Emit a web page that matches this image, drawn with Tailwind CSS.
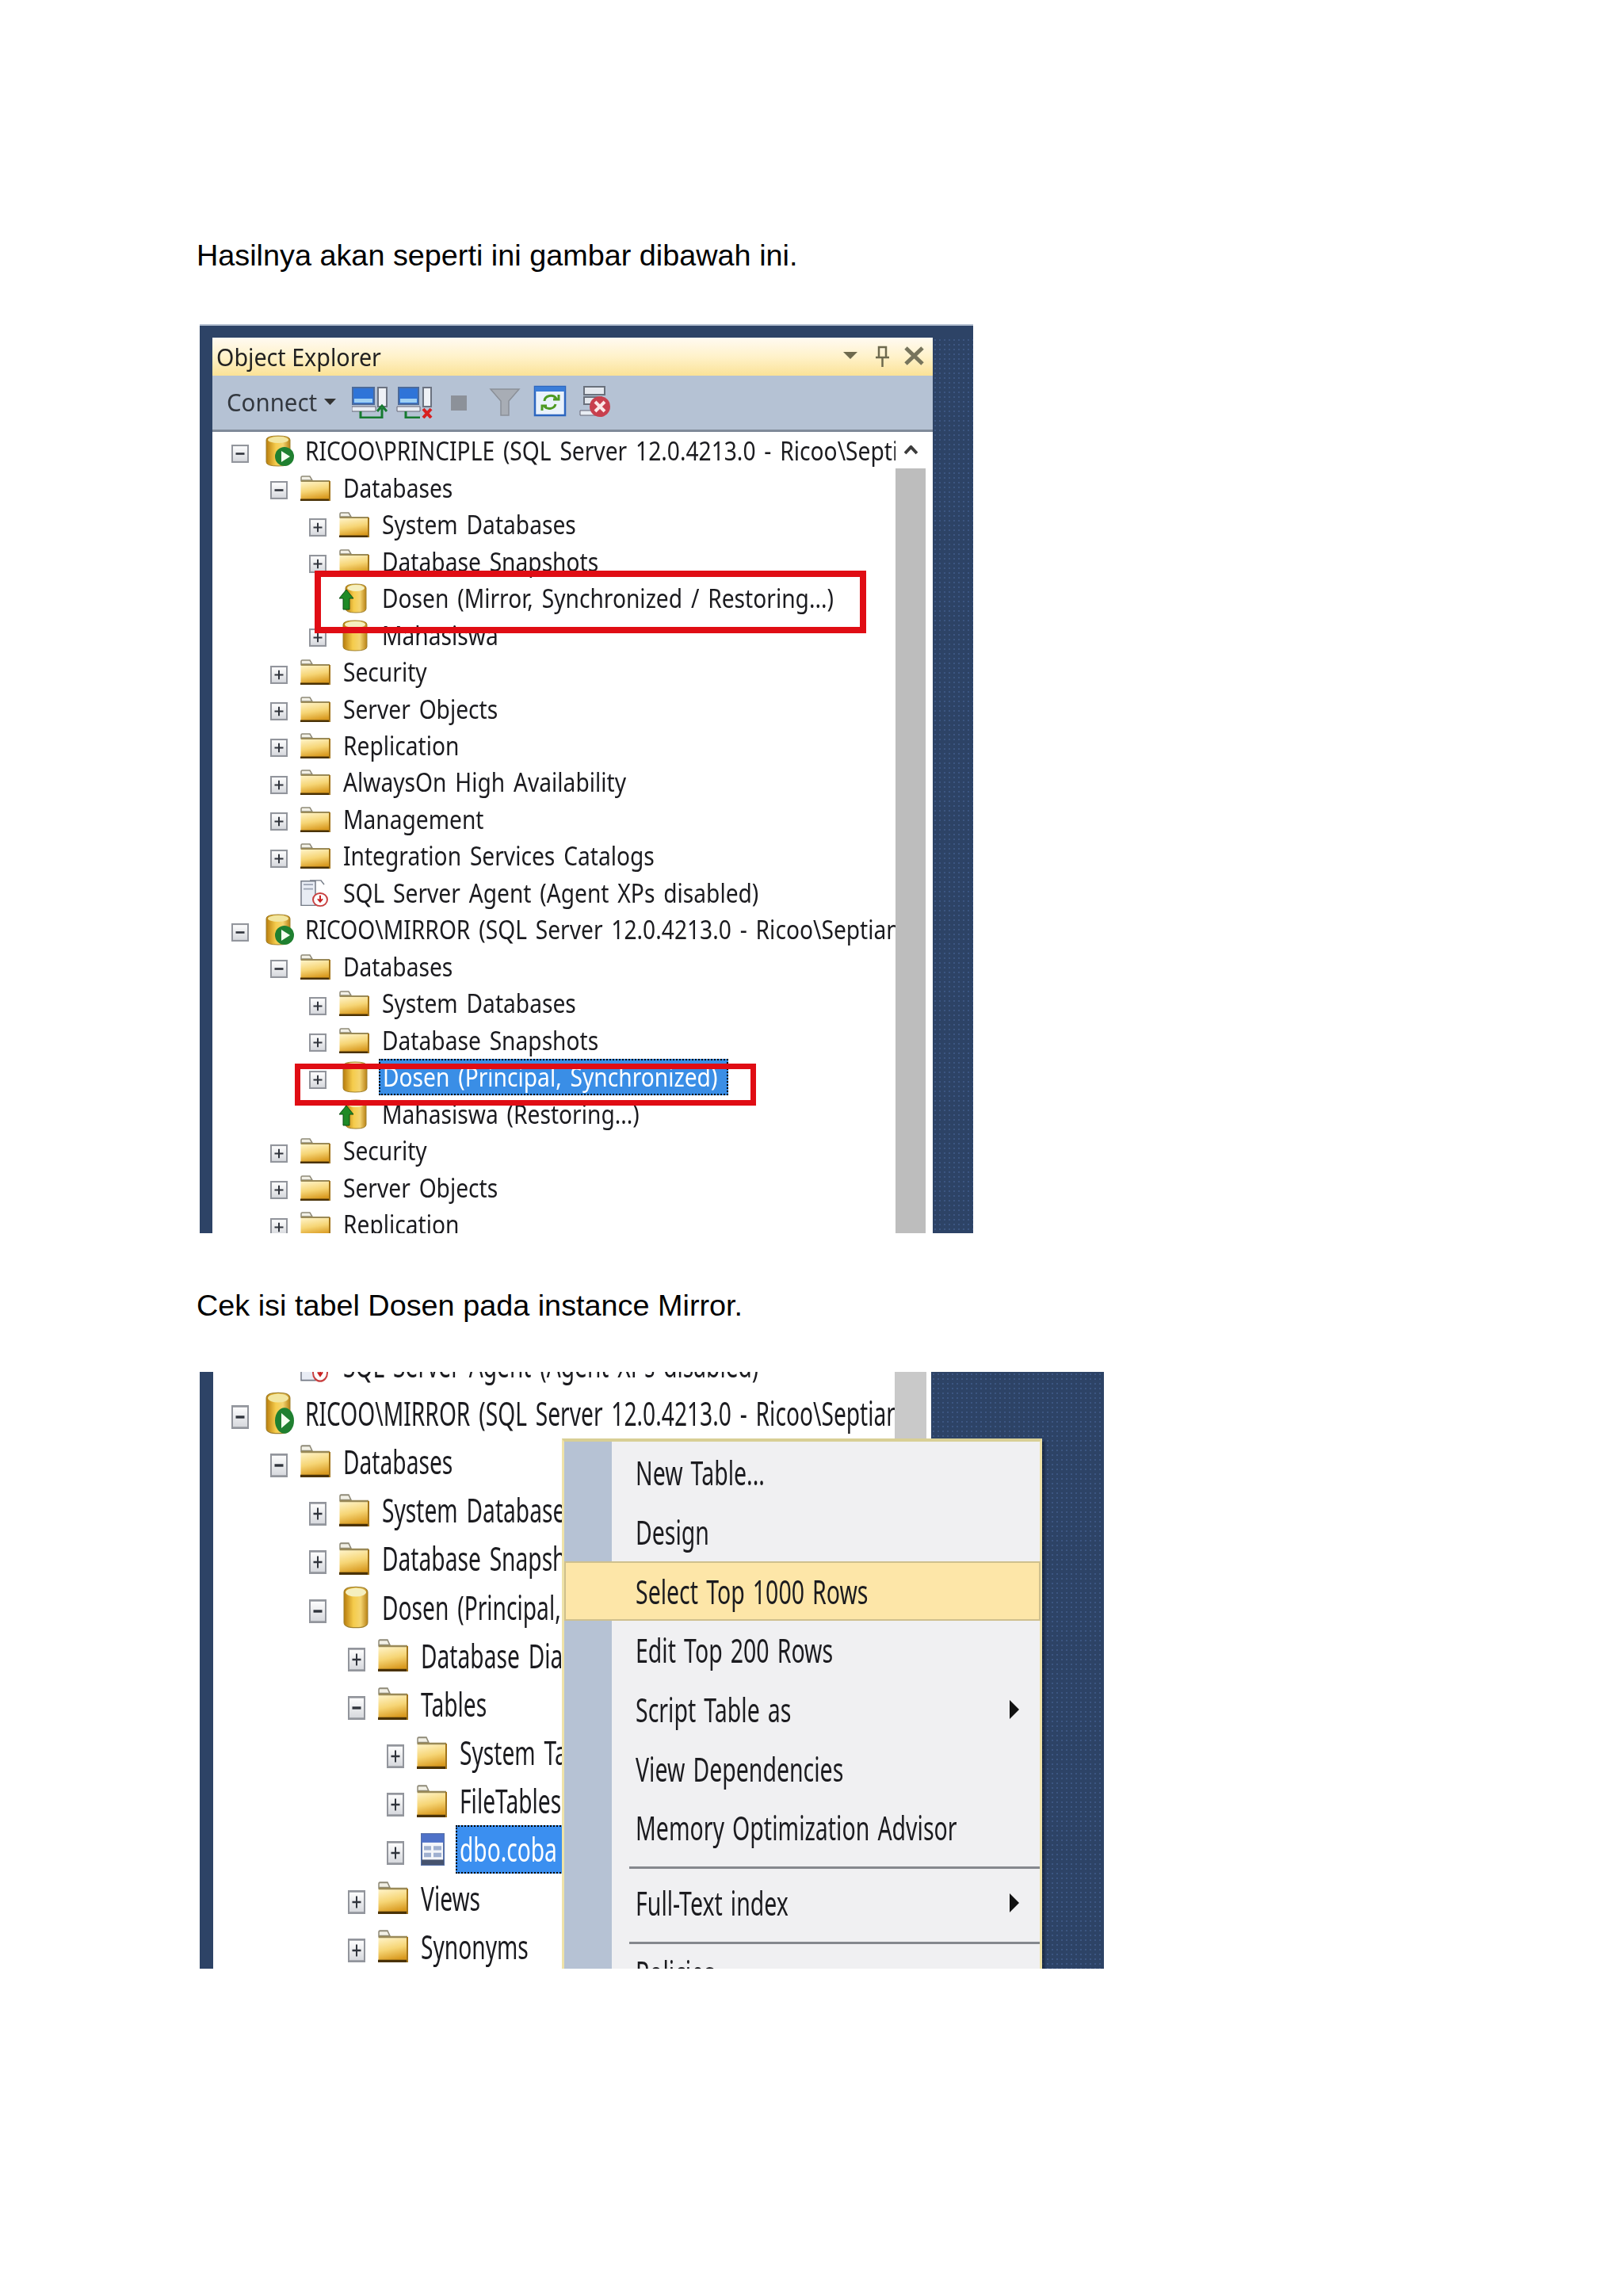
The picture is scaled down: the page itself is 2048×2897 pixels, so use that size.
<!DOCTYPE html>
<html><head><meta charset="utf-8"><script src="https://cdn.jsdelivr.net/npm/@tailwindcss/browser@4"></script></head>
<body class="bg-white">
<svg class="absolute w-0 h-0">
<defs>
<linearGradient id="fg" x1="0" y1="0" x2="0.25" y2="1"><stop offset="0" stop-color="#fff6cf"/><stop offset="0.55" stop-color="#f6d575"/><stop offset="1" stop-color="#d99a20"/></linearGradient>
<linearGradient id="cg" x1="0" y1="0" x2="1" y2="0"><stop offset="0" stop-color="#b87c0c"/><stop offset="0.4" stop-color="#f5cc4c"/><stop offset="0.7" stop-color="#f4d470"/><stop offset="1" stop-color="#b98215"/></linearGradient>
<linearGradient id="bg" x1="0" y1="0" x2="0" y2="1"><stop offset="0" stop-color="#ffffff"/><stop offset="1" stop-color="#d5d7dc"/></linearGradient>
<g id="folder"><path d="M1 8V2.5Q1 1 2.5 1H12l3 5H1z" fill="#f2f0e6" stroke="#8f8a78" stroke-width="1.5"/><path d="M0.5 7H37.5V31.5H0.5z" fill="url(#fg)"/><path d="M1 7H37" stroke="#9a8a58" stroke-width="2"/><path d="M0 29.5H38V32H0z" fill="#4a3206"/><path d="M36 7H38V32H36z" fill="#a2741a"/></g>
<g id="plus"><rect x="1" y="1" width="20" height="20" fill="url(#bg)" stroke="#92959c" stroke-width="2"/><path d="M5.500 11H16.500M11 5.500V16.500" stroke="#30343c" stroke-width="2"/></g>
<g id="minus"><rect x="1" y="1" width="20" height="20" fill="url(#bg)" stroke="#92959c" stroke-width="2"/><path d="M5.500 11H16.500" stroke="#30343c" stroke-width="2.500"/></g>
<g id="db"><path d="M1 6Q1 1 16 1T31 6V34Q31 39 16 39T1 34z" fill="url(#cg)" stroke="#a0812e" stroke-width="1"/><ellipse cx="16" cy="6" rx="13" ry="4" fill="#f5efbf"/></g>
<g id="dbup"><path d="M8 6Q8 1 21 1T34 6V32Q34 37 21 37T8 32z" fill="url(#cg)" stroke="#a0812e" stroke-width="1"/><ellipse cx="21" cy="6" rx="11" ry="4" fill="#f5efbf"/><path d="M9 8L18 19H13V33H5V19H0z" fill="#1f8a26" stroke="#0d4f15" stroke-width="1"/></g>
<g id="server"><path d="M1 6Q1 1 16 1T31 6V34Q31 39 16 39T1 34z" fill="url(#cg)" stroke="#a0812e" stroke-width="1"/><ellipse cx="16" cy="6" rx="13" ry="4" fill="#f2e6a0"/><circle cx="24" cy="27" r="12" fill="#1f8030"/><path d="M20 20L31 27L20 34z" fill="#f4fff0"/></g>
<g id="agent"><path d="M1 3H19V37H1z" fill="#e8ecf4" stroke="#747a86" stroke-width="1.500"/><path d="M4 8H16M4 14H16" stroke="#9ba3b2" stroke-width="2"/><path d="M12 2H26L30 8" fill="none" stroke="#747a86" stroke-width="1.500"/><circle cx="25" cy="29" r="9" fill="#fff" stroke="#c84040" stroke-width="2"/><path d="M25 23V31M22 28L25 32L28 28" stroke="#c82020" stroke-width="2" fill="none"/></g>
<g id="table"><path d="M1 1H29V37H1z" fill="#f4f6fa" stroke="#5570a8" stroke-width="2"/><path d="M1 1H29V11H1z" fill="#4f72c8"/><path d="M4 15H13V20H4zM16 15H26V20H16zM4 23H13V28H4zM16 23H26V28H16z" fill="#9fb0d0"/><path d="M1 31H29V37H1z" fill="#46536e"/></g>
</defs>
</svg>

<main class="pt-[300px] pl-[248px] font-['Noto_Sans',sans-serif] text-[#1b1b1f]">
<p class="h-[44px] font-['Liberation_Sans',sans-serif] text-[37.8px] leading-[44px] text-black">Hasilnya akan seperti ini gambar dibawah ini.</p>

<section class="relative mt-[65px] ml-[4px] flex h-[1147px] w-[976px] overflow-hidden border-t-2 border-[#b3bfd0] bg-[#2d4366] blur-[0.5px]">
  <div class="w-[16px] shrink-0"></div>
  <div class="mt-[15px] flex h-[1130px] w-[909px] shrink-0 flex-col bg-white">
    <div class="flex h-[48px] shrink-0 items-center bg-linear-to-b from-[#fffaf2] via-[#fff2ca] to-[#fbe296] pl-[5px]">
      <span class="inline-block origin-left scale-x-[.925] whitespace-nowrap text-[31px] leading-none text-[#222]">Object Explorer</span>
      <svg class="ml-auto mr-[11px] h-[28px] w-[102px]" viewBox="0 0 102 28"><path d="M0 8H18L9 17z" fill="#6e6a4e"/><path d="M45 2H54V15H45zM41 15H58M49.500 15V27" fill="none" stroke="#6e6a4e" stroke-width="2.500"/><path d="M79 3L100 23M100 3L79 23" stroke="#77745c" stroke-width="5"/></svg>
    </div>
    <div class="flex h-[71px] shrink-0 items-center border-b-[3px] border-[#7f8a99] bg-[#b5c2d4] pl-[18px] pb-[2px]">
      <span class="w-[124px] shrink-0 origin-left scale-x-[.95] whitespace-nowrap text-[31px] leading-none text-[#33383f]">Connect</span>
      <svg class="-ml-[1px] h-[10px] w-[15px] shrink-0" viewBox="0 0 15 10"><path d="M0 1H15L7.500 9z" fill="#333"/></svg>
      <svg class="ml-[20px] h-[42px] w-[350px] shrink-0" viewBox="0 0 350 42">
        <path d="M1 3H28V24H1z" fill="#2f74d8" stroke="#4c6a9a" stroke-width="2"/><path d="M3 17H26V22H3z" fill="#9fd0f4"/><path d="M0 27H30V33H0z" fill="#e8edf4" stroke="#667" stroke-width="1"/><path d="M33 3H44V27H33z" fill="#eef1f6" stroke="#6b7280" stroke-width="2"/><path d="M11 33V41H38V29M32 33L38 26L44 33" fill="none" stroke="#177a30" stroke-width="3"/>
        <path d="M59 3H84V24H59z" fill="#2f74d8" stroke="#4c6a9a" stroke-width="2"/><path d="M61 17H82V22H61z" fill="#9fd0f4"/><path d="M57 27H86V33H57z" fill="#e8edf4" stroke="#667" stroke-width="1"/><path d="M90 3H100V27H90z" fill="#eef1f6" stroke="#6b7280" stroke-width="2"/><path d="M68 33V41H86" fill="none" stroke="#177a30" stroke-width="3"/><path d="M90 30L100 41M100 30L90 41" stroke="#d82020" stroke-width="4"/>
        <rect x="125" y="13" width="20" height="19" fill="#8c9199"/>
        <path d="M175 5H211L198 20V38H188V20z" fill="#a8adb5" stroke="#8b9098" stroke-width="1.500"/>
        <path d="M231 2H269V38H231z" fill="#eaf2fc" stroke="#2c66c0" stroke-width="2.500"/><path d="M231 2H269V8H231z" fill="#3b7dd8"/><path d="M243 20A8 7 0 0 1 258 17M257 24A8 7 0 0 1 243 27M254 18H261V12M246 26H240V32" fill="none" stroke="#4d9a22" stroke-width="3"/>
        <path d="M293 2H319V12H293zM293 15H315V24H293z" fill="#e4e8ee" stroke="#69707c" stroke-width="2"/><path d="M288 32H312V38H288z" fill="#e8edf4" stroke="#667" stroke-width="1"/><circle cx="313" cy="27" r="13" fill="#c8404e"/><path d="M307 21L319 33M319 21L307 33" stroke="#fbe8e8" stroke-width="4"/>
      </svg>
    </div>
    <div class="flex min-h-0 flex-1">
      <div class="relative w-[862px] shrink-0 overflow-hidden pt-[1px]">
        <div class="flex h-[46.48px] items-center pl-[24px]"><svg class="mt-[6px] mr-[21px] h-[23px] w-[22px] shrink-0" viewBox="0 0 22 22" preserveAspectRatio="none"><use href="#minus"/></svg><svg class="mr-[14px] h-[40px] w-[36px] shrink-0" viewBox="0 0 36 40" preserveAspectRatio="none"><use href="#server"/></svg><span class="inline-block origin-left scale-x-[.88] whitespace-nowrap text-[32px] leading-none [word-spacing:4px]">RICOO\PRINCIPLE (SQL Server 12.0.4213.0 - Ricoo\Septian</span></div>
        <div class="flex h-[46.48px] items-center pl-[73px]"><svg class="mt-[6px] mr-[16px] h-[23px] w-[22px] shrink-0" viewBox="0 0 22 22" preserveAspectRatio="none"><use href="#minus"/></svg><svg class="mr-[16px] h-[32px] w-[38px] shrink-0" viewBox="0 0 38 32" preserveAspectRatio="none"><use href="#folder"/></svg><span class="inline-block origin-left scale-x-[.88] whitespace-nowrap text-[32px] leading-none [word-spacing:4px]">Databases</span></div>
        <div class="flex h-[46.48px] items-center pl-[122px]"><svg class="mt-[6px] mr-[16px] h-[23px] w-[22px] shrink-0" viewBox="0 0 22 22" preserveAspectRatio="none"><use href="#plus"/></svg><svg class="mr-[16px] h-[32px] w-[38px] shrink-0" viewBox="0 0 38 32" preserveAspectRatio="none"><use href="#folder"/></svg><span class="inline-block origin-left scale-x-[.88] whitespace-nowrap text-[32px] leading-none [word-spacing:4px]">System Databases</span></div>
        <div class="flex h-[46.48px] items-center pl-[122px]"><svg class="mt-[6px] mr-[16px] h-[23px] w-[22px] shrink-0" viewBox="0 0 22 22" preserveAspectRatio="none"><use href="#plus"/></svg><svg class="mr-[16px] h-[32px] w-[38px] shrink-0" viewBox="0 0 38 32" preserveAspectRatio="none"><use href="#folder"/></svg><span class="inline-block origin-left scale-x-[.88] whitespace-nowrap text-[32px] leading-none [word-spacing:4px]">Database Snapshots</span></div>
        <div class="flex h-[46.48px] items-center pl-[122px]"><div class="mr-[16px] w-[22px] shrink-0"></div><svg class="mr-[16px] h-[38px] w-[38px] shrink-0" viewBox="0 0 38 38" preserveAspectRatio="none"><use href="#dbup"/></svg><span class="inline-block origin-left scale-x-[.88] whitespace-nowrap text-[32px] leading-none [word-spacing:4px]">Dosen (Mirror, Synchronized / Restoring...)</span></div>
        <div class="flex h-[46.48px] items-center pl-[122px]"><svg class="mt-[6px] mr-[20px] h-[23px] w-[22px] shrink-0" viewBox="0 0 22 22" preserveAspectRatio="none"><use href="#plus"/></svg><svg class="mr-[18px] h-[40px] w-[32px] shrink-0" viewBox="0 0 32 40" preserveAspectRatio="none"><use href="#db"/></svg><span class="inline-block origin-left scale-x-[.88] whitespace-nowrap text-[32px] leading-none [word-spacing:4px]">Mahasiswa</span></div>
        <div class="flex h-[46.48px] items-center pl-[73px]"><svg class="mt-[6px] mr-[16px] h-[23px] w-[22px] shrink-0" viewBox="0 0 22 22" preserveAspectRatio="none"><use href="#plus"/></svg><svg class="mr-[16px] h-[32px] w-[38px] shrink-0" viewBox="0 0 38 32" preserveAspectRatio="none"><use href="#folder"/></svg><span class="inline-block origin-left scale-x-[.88] whitespace-nowrap text-[32px] leading-none [word-spacing:4px]">Security</span></div>
        <div class="flex h-[46.48px] items-center pl-[73px]"><svg class="mt-[6px] mr-[16px] h-[23px] w-[22px] shrink-0" viewBox="0 0 22 22" preserveAspectRatio="none"><use href="#plus"/></svg><svg class="mr-[16px] h-[32px] w-[38px] shrink-0" viewBox="0 0 38 32" preserveAspectRatio="none"><use href="#folder"/></svg><span class="inline-block origin-left scale-x-[.88] whitespace-nowrap text-[32px] leading-none [word-spacing:4px]">Server Objects</span></div>
        <div class="flex h-[46.48px] items-center pl-[73px]"><svg class="mt-[6px] mr-[16px] h-[23px] w-[22px] shrink-0" viewBox="0 0 22 22" preserveAspectRatio="none"><use href="#plus"/></svg><svg class="mr-[16px] h-[32px] w-[38px] shrink-0" viewBox="0 0 38 32" preserveAspectRatio="none"><use href="#folder"/></svg><span class="inline-block origin-left scale-x-[.88] whitespace-nowrap text-[32px] leading-none [word-spacing:4px]">Replication</span></div>
        <div class="flex h-[46.48px] items-center pl-[73px]"><svg class="mt-[6px] mr-[16px] h-[23px] w-[22px] shrink-0" viewBox="0 0 22 22" preserveAspectRatio="none"><use href="#plus"/></svg><svg class="mr-[16px] h-[32px] w-[38px] shrink-0" viewBox="0 0 38 32" preserveAspectRatio="none"><use href="#folder"/></svg><span class="inline-block origin-left scale-x-[.88] whitespace-nowrap text-[32px] leading-none [word-spacing:4px]">AlwaysOn High Availability</span></div>
        <div class="flex h-[46.48px] items-center pl-[73px]"><svg class="mt-[6px] mr-[16px] h-[23px] w-[22px] shrink-0" viewBox="0 0 22 22" preserveAspectRatio="none"><use href="#plus"/></svg><svg class="mr-[16px] h-[32px] w-[38px] shrink-0" viewBox="0 0 38 32" preserveAspectRatio="none"><use href="#folder"/></svg><span class="inline-block origin-left scale-x-[.88] whitespace-nowrap text-[32px] leading-none [word-spacing:4px]">Management</span></div>
        <div class="flex h-[46.48px] items-center pl-[73px]"><svg class="mt-[6px] mr-[16px] h-[23px] w-[22px] shrink-0" viewBox="0 0 22 22" preserveAspectRatio="none"><use href="#plus"/></svg><svg class="mr-[16px] h-[32px] w-[38px] shrink-0" viewBox="0 0 38 32" preserveAspectRatio="none"><use href="#folder"/></svg><span class="inline-block origin-left scale-x-[.88] whitespace-nowrap text-[32px] leading-none [word-spacing:4px]">Integration Services Catalogs</span></div>
        <div class="flex h-[46.48px] items-center pl-[73px]"><div class="mr-[16px] w-[22px] shrink-0"></div><svg class="mr-[16px] h-[36px] w-[38px] shrink-0" viewBox="0 0 38 40" preserveAspectRatio="none"><use href="#agent"/></svg><span class="inline-block origin-left scale-x-[.88] whitespace-nowrap text-[32px] leading-none [word-spacing:4px]">SQL Server Agent (Agent XPs disabled)</span></div>
        <div class="flex h-[46.48px] items-center pl-[24px]"><svg class="mt-[6px] mr-[21px] h-[23px] w-[22px] shrink-0" viewBox="0 0 22 22" preserveAspectRatio="none"><use href="#minus"/></svg><svg class="mr-[14px] h-[40px] w-[36px] shrink-0" viewBox="0 0 36 40" preserveAspectRatio="none"><use href="#server"/></svg><span class="inline-block origin-left scale-x-[.88] whitespace-nowrap text-[32px] leading-none [word-spacing:4px]">RICOO\MIRROR (SQL Server 12.0.4213.0 - Ricoo\Septian</span></div>
        <div class="flex h-[46.48px] items-center pl-[73px]"><svg class="mt-[6px] mr-[16px] h-[23px] w-[22px] shrink-0" viewBox="0 0 22 22" preserveAspectRatio="none"><use href="#minus"/></svg><svg class="mr-[16px] h-[32px] w-[38px] shrink-0" viewBox="0 0 38 32" preserveAspectRatio="none"><use href="#folder"/></svg><span class="inline-block origin-left scale-x-[.88] whitespace-nowrap text-[32px] leading-none [word-spacing:4px]">Databases</span></div>
        <div class="flex h-[46.48px] items-center pl-[122px]"><svg class="mt-[6px] mr-[16px] h-[23px] w-[22px] shrink-0" viewBox="0 0 22 22" preserveAspectRatio="none"><use href="#plus"/></svg><svg class="mr-[16px] h-[32px] w-[38px] shrink-0" viewBox="0 0 38 32" preserveAspectRatio="none"><use href="#folder"/></svg><span class="inline-block origin-left scale-x-[.88] whitespace-nowrap text-[32px] leading-none [word-spacing:4px]">System Databases</span></div>
        <div class="flex h-[46.48px] items-center pl-[122px]"><svg class="mt-[6px] mr-[16px] h-[23px] w-[22px] shrink-0" viewBox="0 0 22 22" preserveAspectRatio="none"><use href="#plus"/></svg><svg class="mr-[16px] h-[32px] w-[38px] shrink-0" viewBox="0 0 38 32" preserveAspectRatio="none"><use href="#folder"/></svg><span class="inline-block origin-left scale-x-[.88] whitespace-nowrap text-[32px] leading-none [word-spacing:4px]">Database Snapshots</span></div>
        <div class="flex h-[46.48px] items-center pl-[122px]"><svg class="mt-[6px] mr-[20px] h-[23px] w-[22px] shrink-0" viewBox="0 0 22 22" preserveAspectRatio="none"><use href="#plus"/></svg><svg class="mr-[14px] h-[40px] w-[32px] shrink-0" viewBox="0 0 32 40" preserveAspectRatio="none"><use href="#db"/></svg><div class="flex h-[46px] w-[441px] shrink-0 items-center border-2 border-dotted border-black bg-[#3a8ee6] pl-[3px]"><span class="inline-block origin-left scale-x-[.88] whitespace-nowrap text-[32px] leading-none text-white [word-spacing:4px]">Dosen (Principal, Synchronized)</span></div></div>
        <div class="flex h-[46.48px] items-center pl-[122px]"><div class="mr-[16px] w-[22px] shrink-0"></div><svg class="mr-[16px] h-[38px] w-[38px] shrink-0" viewBox="0 0 38 38" preserveAspectRatio="none"><use href="#dbup"/></svg><span class="inline-block origin-left scale-x-[.88] whitespace-nowrap text-[32px] leading-none [word-spacing:4px]">Mahasiswa (Restoring...)</span></div>
        <div class="flex h-[46.48px] items-center pl-[73px]"><svg class="mt-[6px] mr-[16px] h-[23px] w-[22px] shrink-0" viewBox="0 0 22 22" preserveAspectRatio="none"><use href="#plus"/></svg><svg class="mr-[16px] h-[32px] w-[38px] shrink-0" viewBox="0 0 38 32" preserveAspectRatio="none"><use href="#folder"/></svg><span class="inline-block origin-left scale-x-[.88] whitespace-nowrap text-[32px] leading-none [word-spacing:4px]">Security</span></div>
        <div class="flex h-[46.48px] items-center pl-[73px]"><svg class="mt-[6px] mr-[16px] h-[23px] w-[22px] shrink-0" viewBox="0 0 22 22" preserveAspectRatio="none"><use href="#plus"/></svg><svg class="mr-[16px] h-[32px] w-[38px] shrink-0" viewBox="0 0 38 32" preserveAspectRatio="none"><use href="#folder"/></svg><span class="inline-block origin-left scale-x-[.88] whitespace-nowrap text-[32px] leading-none [word-spacing:4px]">Server Objects</span></div>
        <div class="flex h-[46.48px] items-center pl-[73px]"><svg class="mt-[6px] mr-[16px] h-[23px] w-[22px] shrink-0" viewBox="0 0 22 22" preserveAspectRatio="none"><use href="#plus"/></svg><svg class="mr-[16px] h-[32px] w-[38px] shrink-0" viewBox="0 0 38 32" preserveAspectRatio="none"><use href="#folder"/></svg><span class="inline-block origin-left scale-x-[.88] whitespace-nowrap text-[32px] leading-none [word-spacing:4px]">Replication</span></div>
        <div class="absolute top-[175px] left-[129px] h-[79px] w-[696px] border-[8px] border-[#e00d14]"></div>
        <div class="absolute top-[797px] left-[104px] h-[53px] w-[582px] border-[7px] border-[#e00d14]"></div>
      </div>
      <div class="w-[38px] shrink-0">
        <div class="flex h-[46px] items-center justify-center"><svg class="h-[12px] w-[17px]" viewBox="0 0 17 12"><path d="M1 10L8.500 2L16 10" fill="none" stroke="#3c3c3c" stroke-width="4"/></svg></div>
        <div class="h-[1020px] bg-[#bdbdbd]"></div>
      </div>
    </div>
  </div>
  <div class="mt-[15px] flex-1 bg-[radial-gradient(#3c5682_1px,transparent_1.2px)] bg-[length:6px_6px]"></div>
</section>

<p class="mt-[69px] h-[44px] font-['Liberation_Sans',sans-serif] text-[37.8px] leading-[44px] text-black">Cek isi tabel Dosen pada instance Mirror.</p>

<section class="relative mt-[62px] ml-[4px] flex h-[753px] w-[1141px] overflow-hidden bg-[#2d4366] blur-[0.5px]">
  <div class="w-[17px] shrink-0"></div>
  <div class="relative -mt-[40px] w-[860px] shrink-0 overflow-hidden bg-white">
    <div class="flex h-[61.2px] items-center pl-[72px]"><div class="mr-[16px] w-[22px] shrink-0"></div><svg class="mr-[16px] h-[46px] w-[38px] shrink-0" viewBox="0 0 38 40" preserveAspectRatio="none"><use href="#agent"/></svg><span class="inline-block origin-left scale-x-[.88] scale-y-[1.31] whitespace-nowrap text-[32px] leading-none [word-spacing:4px]">SQL Server Agent (Agent XPs disabled)</span></div>
    <div class="flex h-[61.2px] items-center pl-[23px]"><svg class="mt-[10px] mr-[21px] h-[30px] w-[22px] shrink-0" viewBox="0 0 22 22" preserveAspectRatio="none"><use href="#minus"/></svg><svg class="mr-[14px] h-[54px] w-[36px] shrink-0" viewBox="0 0 36 40" preserveAspectRatio="none"><use href="#server"/></svg><span class="inline-block origin-left scale-x-[.88] scale-y-[1.31] whitespace-nowrap text-[32px] leading-none [word-spacing:4px]">RICOO\MIRROR (SQL Server 12.0.4213.0 - Ricoo\Septian</span></div>
    <div class="flex h-[61.2px] items-center pl-[72px]"><svg class="mt-[10px] mr-[16px] h-[30px] w-[22px] shrink-0" viewBox="0 0 22 22" preserveAspectRatio="none"><use href="#minus"/></svg><svg class="mr-[16px] h-[41px] w-[38px] shrink-0" viewBox="0 0 38 32" preserveAspectRatio="none"><use href="#folder"/></svg><span class="inline-block origin-left scale-x-[.88] scale-y-[1.31] whitespace-nowrap text-[32px] leading-none [word-spacing:4px]">Databases</span></div>
    <div class="flex h-[61.2px] items-center pl-[121px]"><svg class="mt-[10px] mr-[16px] h-[30px] w-[22px] shrink-0" viewBox="0 0 22 22" preserveAspectRatio="none"><use href="#plus"/></svg><svg class="mr-[16px] h-[41px] w-[38px] shrink-0" viewBox="0 0 38 32" preserveAspectRatio="none"><use href="#folder"/></svg><span class="inline-block origin-left scale-x-[.88] scale-y-[1.31] whitespace-nowrap text-[32px] leading-none [word-spacing:4px]">System Databases</span></div>
    <div class="flex h-[61.2px] items-center pl-[121px]"><svg class="mt-[10px] mr-[16px] h-[30px] w-[22px] shrink-0" viewBox="0 0 22 22" preserveAspectRatio="none"><use href="#plus"/></svg><svg class="mr-[16px] h-[41px] w-[38px] shrink-0" viewBox="0 0 38 32" preserveAspectRatio="none"><use href="#folder"/></svg><span class="inline-block origin-left scale-x-[.88] scale-y-[1.31] whitespace-nowrap text-[32px] leading-none [word-spacing:4px]">Database Snapshots</span></div>
    <div class="flex h-[61.2px] items-center pl-[121px]"><svg class="mt-[10px] mr-[21px] h-[30px] w-[22px] shrink-0" viewBox="0 0 22 22" preserveAspectRatio="none"><use href="#minus"/></svg><svg class="mr-[17px] h-[54px] w-[32px] shrink-0" viewBox="0 0 32 40" preserveAspectRatio="none"><use href="#db"/></svg><span class="inline-block origin-left scale-x-[.88] scale-y-[1.31] whitespace-nowrap text-[32px] leading-none [word-spacing:4px]">Dosen (Principal, Synchronized)</span></div>
    <div class="flex h-[61.2px] items-center pl-[170px]"><svg class="mt-[10px] mr-[16px] h-[30px] w-[22px] shrink-0" viewBox="0 0 22 22" preserveAspectRatio="none"><use href="#plus"/></svg><svg class="mr-[16px] h-[41px] w-[38px] shrink-0" viewBox="0 0 38 32" preserveAspectRatio="none"><use href="#folder"/></svg><span class="inline-block origin-left scale-x-[.88] scale-y-[1.31] whitespace-nowrap text-[32px] leading-none [word-spacing:4px]">Database Diagrams</span></div>
    <div class="flex h-[61.2px] items-center pl-[170px]"><svg class="mt-[10px] mr-[16px] h-[30px] w-[22px] shrink-0" viewBox="0 0 22 22" preserveAspectRatio="none"><use href="#minus"/></svg><svg class="mr-[16px] h-[41px] w-[38px] shrink-0" viewBox="0 0 38 32" preserveAspectRatio="none"><use href="#folder"/></svg><span class="inline-block origin-left scale-x-[.88] scale-y-[1.31] whitespace-nowrap text-[32px] leading-none [word-spacing:4px]">Tables</span></div>
    <div class="flex h-[61.2px] items-center pl-[219px]"><svg class="mt-[10px] mr-[16px] h-[30px] w-[22px] shrink-0" viewBox="0 0 22 22" preserveAspectRatio="none"><use href="#plus"/></svg><svg class="mr-[16px] h-[41px] w-[38px] shrink-0" viewBox="0 0 38 32" preserveAspectRatio="none"><use href="#folder"/></svg><span class="inline-block origin-left scale-x-[.88] scale-y-[1.31] whitespace-nowrap text-[32px] leading-none [word-spacing:4px]">System Tables</span></div>
    <div class="flex h-[61.2px] items-center pl-[219px]"><svg class="mt-[10px] mr-[16px] h-[30px] w-[22px] shrink-0" viewBox="0 0 22 22" preserveAspectRatio="none"><use href="#plus"/></svg><svg class="mr-[16px] h-[41px] w-[38px] shrink-0" viewBox="0 0 38 32" preserveAspectRatio="none"><use href="#folder"/></svg><span class="inline-block origin-left scale-x-[.88] scale-y-[1.31] whitespace-nowrap text-[32px] leading-none [word-spacing:4px]">FileTables</span></div>
    <div class="flex h-[61.2px] items-center pl-[219px]"><svg class="mt-[10px] mr-[21px] h-[30px] w-[22px] shrink-0" viewBox="0 0 22 22" preserveAspectRatio="none"><use href="#plus"/></svg><svg class="mr-[14px] h-[41px] w-[30px] shrink-0" viewBox="0 0 30 38" preserveAspectRatio="none"><use href="#table"/></svg><div class="flex h-[61px] w-[300px] shrink-0 items-center border-2 border-dotted border-black bg-[#3b8ff0] pl-[3px]"><span class="inline-block origin-left scale-x-[.88] scale-y-[1.31] whitespace-nowrap text-[32px] leading-none text-white [word-spacing:4px]">dbo.coba</span></div></div>
    <div class="flex h-[61.2px] items-center pl-[170px]"><svg class="mt-[10px] mr-[16px] h-[30px] w-[22px] shrink-0" viewBox="0 0 22 22" preserveAspectRatio="none"><use href="#plus"/></svg><svg class="mr-[16px] h-[41px] w-[38px] shrink-0" viewBox="0 0 38 32" preserveAspectRatio="none"><use href="#folder"/></svg><span class="inline-block origin-left scale-x-[.88] scale-y-[1.31] whitespace-nowrap text-[32px] leading-none [word-spacing:4px]">Views</span></div>
    <div class="flex h-[61.2px] items-center pl-[170px]"><svg class="mt-[10px] mr-[16px] h-[30px] w-[22px] shrink-0" viewBox="0 0 22 22" preserveAspectRatio="none"><use href="#plus"/></svg><svg class="mr-[16px] h-[41px] w-[38px] shrink-0" viewBox="0 0 38 32" preserveAspectRatio="none"><use href="#folder"/></svg><span class="inline-block origin-left scale-x-[.88] scale-y-[1.31] whitespace-nowrap text-[32px] leading-none [word-spacing:4px]">Synonyms</span></div>
  </div>
  <div class="w-[40px] shrink-0 bg-[#c9c9c9]"></div>
  <div class="w-[6px] shrink-0 bg-white"></div>
  <div class="flex-1 bg-[radial-gradient(#3c5682_1px,transparent_1.2px)] bg-[length:6px_6px]"></div>

  <div class="absolute top-[84px] left-[457px] flex h-[700px] w-[606px] border-x-[3px] border-t-[4px] border-x-[#efe3a8] border-t-[#d8cf95] bg-[#f0f0f2] pt-[2px] shadow-[3px_3px_3px_rgba(10,20,40,.6)]">
    <div class="-mt-[2px] w-[60px] shrink-0 bg-[#b6c2d4]"></div>
    <div class="relative flex-1 pl-[30px]">
      <div class="flex h-[74.7px] items-center"><span class="inline-block origin-left scale-x-[.89] scale-y-[1.31] whitespace-nowrap text-[32px] leading-none [word-spacing:3px]">New Table...</span></div>
      <div class="flex h-[74.7px] items-center"><span class="inline-block origin-left scale-x-[.89] scale-y-[1.31] whitespace-nowrap text-[32px] leading-none [word-spacing:3px]">Design</span></div>
      <div class="relative -ml-[90px] -mr-[1px] flex h-[74.7px] items-center border-2 border-[#cfc08e] bg-[#fde6a8] pl-[88px]"><span class="inline-block origin-left scale-x-[.89] scale-y-[1.31] whitespace-nowrap text-[32px] leading-none [word-spacing:3px]">Select Top 1000 Rows</span></div>
      <div class="flex h-[74.7px] items-center"><span class="inline-block origin-left scale-x-[.89] scale-y-[1.31] whitespace-nowrap text-[32px] leading-none [word-spacing:3px]">Edit Top 200 Rows</span></div>
      <div class="flex h-[74.7px] items-center justify-between pr-[26px]"><span class="inline-block origin-left scale-x-[.89] scale-y-[1.31] whitespace-nowrap text-[32px] leading-none [word-spacing:3px]">Script Table as</span><svg class="h-[24px] w-[12px]" viewBox="0 0 12 24"><path d="M0 0L12 12L0 24z" fill="#111"/></svg></div>
      <div class="flex h-[74.7px] items-center"><span class="inline-block origin-left scale-x-[.89] scale-y-[1.31] whitespace-nowrap text-[32px] leading-none [word-spacing:3px]">View Dependencies</span></div>
      <div class="flex h-[74.7px] items-center"><span class="inline-block origin-left scale-x-[.89] scale-y-[1.31] whitespace-nowrap text-[32px] leading-none [word-spacing:3px]">Memory Optimization Advisor</span></div>
      <div class="-ml-[8px] mt-[11px] h-[3px] bg-[#85888e]"></div>
      <div class="mt-[6px] flex h-[74.7px] items-center justify-between pr-[26px]"><span class="inline-block origin-left scale-x-[.89] scale-y-[1.31] whitespace-nowrap text-[32px] leading-none [word-spacing:3px]">Full-Text index</span><svg class="h-[24px] w-[12px]" viewBox="0 0 12 24"><path d="M0 0L12 12L0 24z" fill="#111"/></svg></div>
      <div class="-ml-[8px] mt-[11px] h-[3px] bg-[#85888e]"></div>
      <div class="mt-[20px] flex h-[74.7px] items-start"><span class="inline-block origin-left scale-x-[.89] scale-y-[1.31] whitespace-nowrap text-[32px] leading-none [word-spacing:3px]">Policies</span></div>
    </div>
  </div>
</section>
</main>
</body></html>
